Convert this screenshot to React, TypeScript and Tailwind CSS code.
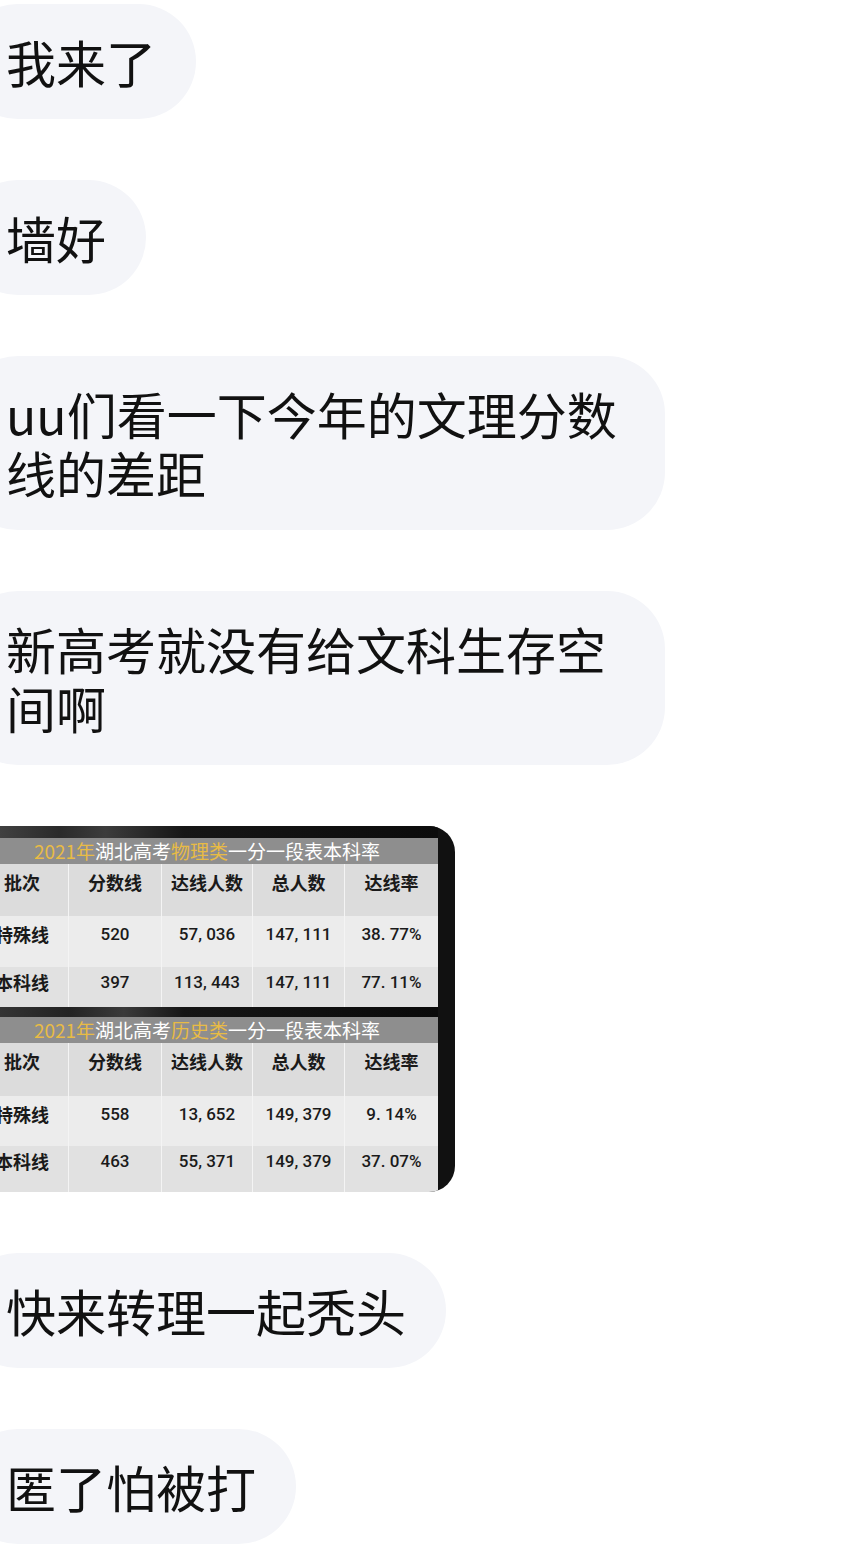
import React from "react";

const CJK = "font-['Noto_Sans_CJK_SC',sans-serif]";

function Bubble({ children }: { children: React.ReactNode }) {
  return (
    <div
      className={`-ml-[40px] w-fit max-w-[705px] rounded-[58px] bg-[#f4f5f9] py-[28px] pl-[46px] pr-[40px] text-[50px] leading-[59px] text-[#111] ${CJK}`}
    >
      {children}
    </div>
  );
}

const widths = ["w-[93px]", "w-[93px]", "w-[91px]", "w-[92px]", "w-[93px]"];

function Row({
  cells,
  bg,
  h,
  pt,
  header,
}: {
  cells: string[];
  bg: string;
  h: string;
  pt: string;
  header?: boolean;
}) {
  return (
    <div className={`flex ${h} ${bg}`}>
      {cells.map((c, i) => {
        const isNum = !header && i > 0;
        return (
          <div
            key={i}
            className={`${widths[i]} ${pt} shrink-0 whitespace-nowrap text-center ${
              i < 4 ? "border-r border-[#f4f4f4]" : ""
            } ${
              isNum
                ? "font-['Roboto',sans-serif] text-[17px] font-medium leading-[20px] text-[#1a1a1a]"
                : `${CJK} text-[18px] font-bold leading-[20px] text-[#1a1a1a]`
            }`}
          >
            {c}
          </div>
        );
      })}
    </div>
  );
}

function Table({
  subject,
  rows,
  hs,
}: {
  subject: string;
  rows: string[][];
  hs: string[];
}) {
  return (
    <div className="flex w-[462px] flex-col">
      <div
        className={`${hs[0]} flex items-center justify-center bg-[#8e8e8e] text-[19px] leading-[22px] text-white ${CJK}`}
      >
        <span className="text-[#e8bb45]">2021年</span>
        <span>湖北高考</span>
        <span className="text-[#e8bb45]">{subject}</span>
        <span>一分一段表本科率</span>
      </div>
      <Row
        cells={["批次", "分数线", "达线人数", "总人数", "达线率"]}
        bg="bg-[#dcdcdc]"
        h={hs[1]}
        pt="pt-[8px]"
        header
      />
      <Row cells={rows[0]} bg="bg-[#ececec]" h={hs[2]} pt="pt-[8px]" />
      <Row cells={rows[1]} bg="bg-[#e1e1e1]" h={hs[3]} pt="pt-[5px]" />
    </div>
  );
}

function TableImage() {
  return (
    <div className="-ml-[24px] flex w-[479px] flex-col overflow-hidden rounded-r-[26px] bg-[#111] pr-[17px]">
      <div className="h-[12px] bg-[linear-gradient(90deg,#4a4a4a_0%,#2a2a2a_18%,#3c3c3c_28%,#161616_45%,#0c0c0c_100%)]" />
      <Table
        subject="物理类"
        rows={[
          ["特殊线", "520", "57, 036", "147, 111", "38. 77%"],
          ["本科线", "397", "113, 443", "147, 111", "77. 11%"],
        ]}
        hs={["h-[26px]", "h-[52px]", "h-[51px]", "h-[40px]"]}
      />
      <div className="h-[10px] bg-[linear-gradient(90deg,#3a3a3a_0%,#222_20%,#3a3a3a_32%,#151515_45%,#0a0a0a_100%)]" />
      <Table
        subject="历史类"
        rows={[
          ["特殊线", "558", "13, 652", "149, 379", "9. 14%"],
          ["本科线", "463", "55, 371", "149, 379", "37. 07%"],
        ]}
        hs={["h-[26px]", "h-[53px]", "h-[50px]", "h-[46px]"]}
      />
    </div>
  );
}

export default function App() {
  return (
    <div className="min-h-[1553px] w-full overflow-hidden bg-white">
      <div className="flex flex-col items-start gap-[61px] pt-[4px]">
        <Bubble>我来了</Bubble>
        <Bubble>墙好</Bubble>
        <Bubble>uu们看一下今年的文理分数线的差距</Bubble>
        <Bubble>新高考就没有给文科生存空间啊</Bubble>
        <TableImage />
        <Bubble>快来转理一起秃头</Bubble>
        <Bubble>匿了怕被打</Bubble>
      </div>
    </div>
  );
}
